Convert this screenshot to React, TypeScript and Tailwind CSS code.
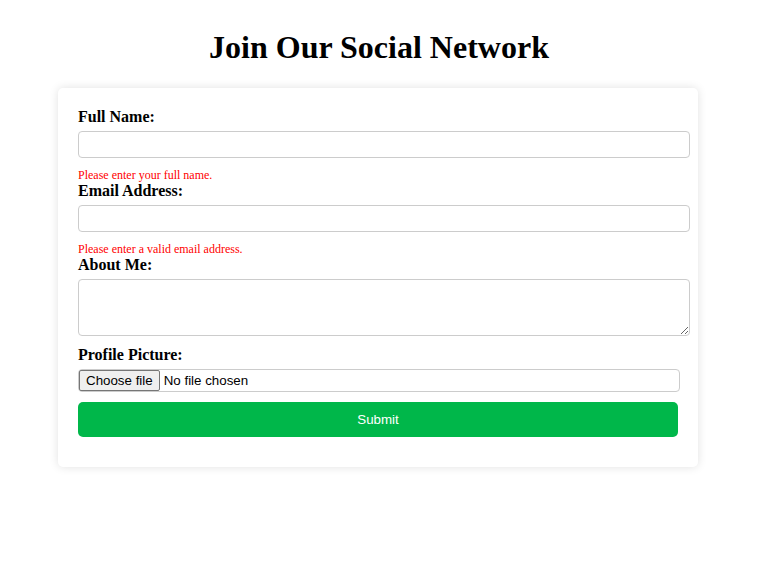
import React from 'react';

const labelCls = "block mb-[5px] text-[16px] leading-[18px] font-bold text-black";
const inputCls = "block w-[612px] h-[27px] px-[5px] border border-[#ccc] rounded-[4px] bg-white text-[13.33px] font-['Liberation_Sans',Arial,sans-serif] outline-none";
const errorCls = "text-[12px] leading-[14px] text-[#ff0000]";

export default function App() {
  return (
    <div className="min-h-[562px] bg-white p-[8px] font-['Liberation_Serif','Times_New_Roman',serif] text-black">
      <h1 className="mt-[21px] mb-[22px] text-center text-[32px] leading-[37px] font-bold">Join Our Social Network</h1>

      <div className="w-[640px] mx-auto -translate-x-[1px] bg-white rounded-[5px] p-[20px] shadow-[0_0_10px_rgba(0,0,0,0.12)]">
        <form onSubmit={(e) => e.preventDefault()}>
          <label className={labelCls}>Full Name:</label>
          <input type="text" className={inputCls + " mb-[10px]"} />
          <div className={errorCls}>Please enter your full name.</div>

          <label className={labelCls}>Email Address:</label>
          <input type="email" className={inputCls + " mb-[10px]"} />
          <div className={errorCls}>Please enter a valid email address.</div>

          <label className={labelCls}>About Me:</label>
          <textarea className="block w-[612px] h-[57px] px-[5px] py-[5px] mb-[10px] border border-[#ccc] rounded-[4px] bg-white text-[13.33px] font-['Liberation_Mono',monospace] outline-none" />

          <label className={labelCls}>Profile Picture:</label>
          <label className="flex items-center w-[602px] h-[23px] mt-[1px] mb-[10px] border border-[#ccc] rounded-[4px] text-[13.33px] font-['Liberation_Sans',Arial,sans-serif] text-black cursor-pointer">
            <input type="file" className="hidden" />
            <span className="flex items-center h-[21px] px-[6px] border border-[#767676] rounded-[2px] bg-[#efefef]">Choose file</span>
            <span className="ml-[4px]">No file chosen</span>
          </label>

          <button
            type="submit"
            className="block w-[600px] h-[35px] mb-[10px] rounded-[5px] bg-[#00b74a] text-white text-[13.33px] font-['Liberation_Sans',Arial,sans-serif]"
          >
            Submit
          </button>
        </form>
      </div>
    </div>
  );
}
